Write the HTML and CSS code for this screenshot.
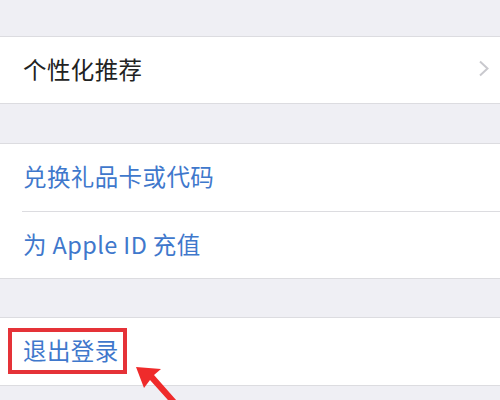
FILE: index.html
```html
<!DOCTYPE html>
<html lang="zh">
<head>
<meta charset="utf-8">
<link rel="stylesheet" href="styles.css">
</head>
<body>
<div class="page">
  <div class="spacer top"></div>
  <div class="group">
    <div class="cell">
      <span class="label dark">个性化推荐</span>
      <svg class="chevron" width="12" height="17" viewBox="0 0 12 17"><path d="M2 1.5 L9.5 8.5 L2 15.5" fill="none" stroke="#c9c9ce" stroke-width="2"/></svg>
    </div>
  </div>
  <div class="spacer g1"></div>
  <div class="group">
    <div class="cell tall"><span class="label blue">兑换礼品卡或代码</span></div>
    <div class="sep"></div>
    <div class="cell"><span class="label blue">为 Apple ID 充值</span></div>
  </div>
  <div class="spacer g2"></div>
  <div class="group">
    <div class="cell last">
      <span class="label blue marked">退出登录</span>
      <svg class="arrow" width="60" height="45" viewBox="0 0 60 45"><path d="M2 3 L27 5 L20 11 L50 45 L42 45 L16 16 L10 24 Z" fill="#ef2b2b"/></svg>
    </div>
  </div>
  <div class="spacer"></div>
</div>
</body>
</html>
```
FILE: styles.css
```css
html, body {
  margin: 0;
  padding: 0;
}
body {
  background: #efeff4;
  font-family: "Noto Sans CJK SC", "Noto Sans", sans-serif;
}
.page {
  width: 500px;
  height: 400px;
  overflow: hidden;
  background: #efeff4;
  display: flex;
  flex-direction: column;
}
.spacer {
  flex: none;
}
.spacer.top { height: 36px; }
.spacer.g1 { height: 39px; }
.spacer.g2 { height: 38px; }
.group {
  flex: none;
  background: #fff;
  border-top: 1px solid #dcdce0;
  border-bottom: 1px solid #dcdce0;
}
.cell {
  height: 66px;
  box-sizing: border-box;
  padding: 0 10px 3px 23px;
  display: flex;
  align-items: center;
  position: relative;
}
.cell.tall { height: 67px; }
.cell.last { height: 67px; }
.sep {
  height: 1px;
  margin-left: 22px;
  background: #dcdce0;
}
.label {
  font-size: 23.5px;
  line-height: 32px;
  letter-spacing: 0.4px;
}
.dark { color: #222; }
.blue { color: #3f78cc; }
.chevron {
  margin-left: auto;
  margin-right: 0;
}
.marked {
  position: relative;
}
.marked::after {
  content: "";
  position: absolute;
  left: -15px;
  top: -6px;
  right: -8px;
  bottom: -8px;
  border: 4px solid #e53238;
}
.arrow {
  position: absolute;
  left: 134px;
  top: 46px;
}
```
